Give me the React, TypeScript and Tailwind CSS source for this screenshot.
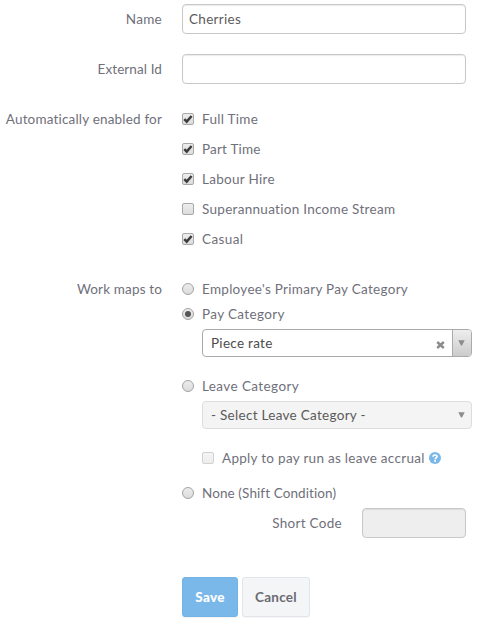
import type { ReactNode } from 'react';
import clsx from 'clsx';

function Tick() {
  return (
    <svg viewBox="0 0 12 12" className="absolute inset-0 h-3 w-3">
      <path d="M2.3 6.2 4.7 8.6 9.6 3" fill="none" stroke="#3c3c3c" strokeWidth="2.5" />
    </svg>
  );
}

function Check({ on, disabled }: { on?: boolean; disabled?: boolean }) {
  return (
    <span
      className={clsx(
        'relative h-3 w-3 shrink-0 rounded-[2px] border bg-linear-to-b',
        disabled ? 'border-[#d2d2d2] from-[#f4f4f4] to-[#ededed]' : 'border-[#a8a8a8] from-[#ededed] to-[#dcdcdc]',
      )}
    >
      {on && (
        <span className="absolute -inset-px">
          <Tick />
        </span>
      )}
    </span>
  );
}

function Radio({ on }: { on?: boolean }) {
  return (
    <span className="flex h-3 w-3 shrink-0 items-center justify-center rounded-full border border-[#a3a3a3] bg-linear-to-b from-[#ececec] to-[#dcdcdc]">
      {on && <span className="h-1.5 w-1.5 rounded-full bg-[#555]" />}
    </span>
  );
}

function Label({ children, className }: { children: ReactNode; className?: string }) {
  return <div className={clsx('w-[162px] shrink-0 text-right', className)}>{children}</div>;
}

function Option({ control, children, className }: { control: ReactNode; children: ReactNode; className?: string }) {
  return (
    <div className={clsx('flex items-center gap-2 whitespace-nowrap', className)}>
      {control}
      <span>{children}</span>
    </div>
  );
}

function Arrow() {
  return (
    <svg viewBox="0 0 7 6" className="h-1.5 w-[7px]">
      <path d="M.3 .3h6.4L4 5.5H3z" fill="#8c8c8c" />
    </svg>
  );
}

const field = 'h-[30px] rounded-[4px] border border-[#c8c8c8] shadow-[inset_0_1px_1px_rgba(0,0,0,0.08)]';

export default function App() {
  return (
    <div className="h-[625px] w-[481px] overflow-hidden bg-white pt-1 font-['Lato',sans-serif] text-[13.5px] leading-5 tracking-[0.29px] text-[#70707a]">
      <div className="flex items-center gap-5">
        <Label>Name</Label>
        <div className={clsx(field, 'flex w-[284px] items-center px-1.5 text-[#5c5c5c]')}>Cherries</div>
      </div>
      <div className="mt-5 flex items-center gap-5">
        <Label className="tracking-[0.1px]">External Id</Label>
        <div className={clsx(field, 'w-[284px]')} />
      </div>
      <div className="mt-5 flex gap-5">
        <Label className="leading-[30px] tracking-[0.18px]">Automatically enabled for</Label>
        <div className="flex flex-col">
          <Option className="h-[30px]" control={<Check on />}>Full Time</Option>
          <Option className="h-[30px] tracking-[0.2px]" control={<Check on />}>Part Time</Option>
          <Option className="h-[30px]" control={<Check on />}>Labour Hire</Option>
          <Option className="h-[30px]" control={<Check />}>Superannuation Income Stream</Option>
          <Option className="h-[30px] tracking-[0.4px]" control={<Check on />}>Casual</Option>
        </div>
      </div>
      <div className="mt-[25px] flex gap-5">
        <Label className="tracking-[0.15px]">Work maps to</Label>
        <div className="flex w-[290px] flex-col">
          <Option className="h-5" control={<Radio />}>Employee's Primary Pay Category</Option>
          <Option className="mt-[5px] h-5 tracking-[0.35px]" control={<Radio on />}>Pay Category</Option>
          <div className="mt-[5px] ml-5 flex h-7 overflow-hidden rounded-[4px] border border-[#aaa] text-[#4c4c4c]">
            <div className="flex flex-1 items-center justify-between pr-[7px] pl-2">
              <span>Piece rate</span>
              <svg viewBox="0 0 9 8" className="mt-1 h-2 w-[9px]">
                <path d="M1.2 1 7.8 7M7.8 1 1.2 7" stroke="#8c8c8c" strokeWidth="2.4" />
              </svg>
            </div>
            <div className="flex w-[19px] items-center justify-center border-l border-[#aaa] bg-linear-to-b from-[#eee] to-[#ccc] pr-0.5">
              <Arrow />
            </div>
          </div>
          <Option className="mt-[19px] h-5 tracking-[0.4px]" control={<Radio />}>Leave Category</Option>
          <div className="mt-[5px] ml-5 flex h-7 items-center justify-between rounded-[4px] border border-[#ddd] bg-[#f4f4f4] pr-[6px] pl-2 text-[#5a5a5a]">
            <span>- Select Leave Category -</span>
            <Arrow />
          </div>
          <div className="mt-[19px] ml-5 flex h-5 items-center">
            <Option control={<Check disabled />}>Apply to pay run as leave accrual</Option>
            <svg viewBox="0 0 12 12" className="ml-1 h-3 w-3">
              <circle cx="6" cy="6" r="6" fill="#7ab8ea" />
              <path d="M4 4.7C4.1 2.4 8 2.5 8 4.6 8 6 6.1 5.9 6.1 7.3" fill="none" stroke="#fff" strokeWidth="1.7" />
              <rect x="5.2" y="8.1" width="1.8" height="1.7" fill="#fff" />
            </svg>
          </div>
          <Option className="mt-[15px] h-5 tracking-[0.1px]" control={<Radio />}>None (Shift Condition)</Option>
          <div className="mt-[5px] mr-1.5 flex items-center justify-end gap-5">
            <span>Short Code</span>
            <div className={clsx(field, 'w-[104px] bg-[#eee]')} />
          </div>
          <div className="mt-[39px] flex gap-1">
            <button className="h-10 w-14 rounded-[3px] border border-[#74b3e4] bg-[#7ab8ea] font-black tracking-[0.3px] text-white shadow-[0_1px_1px_rgba(0,0,0,0.05)]">
              Save
            </button>
            <button className="h-10 w-[68px] rounded-[3px] border border-[#e2e5ea] bg-[#f4f5f7] font-bold tracking-[0.25px] text-[#6a6a72] shadow-[0_1px_1px_rgba(0,0,0,0.04)]">
              Cancel
            </button>
          </div>
        </div>
      </div>
    </div>
  );
}
